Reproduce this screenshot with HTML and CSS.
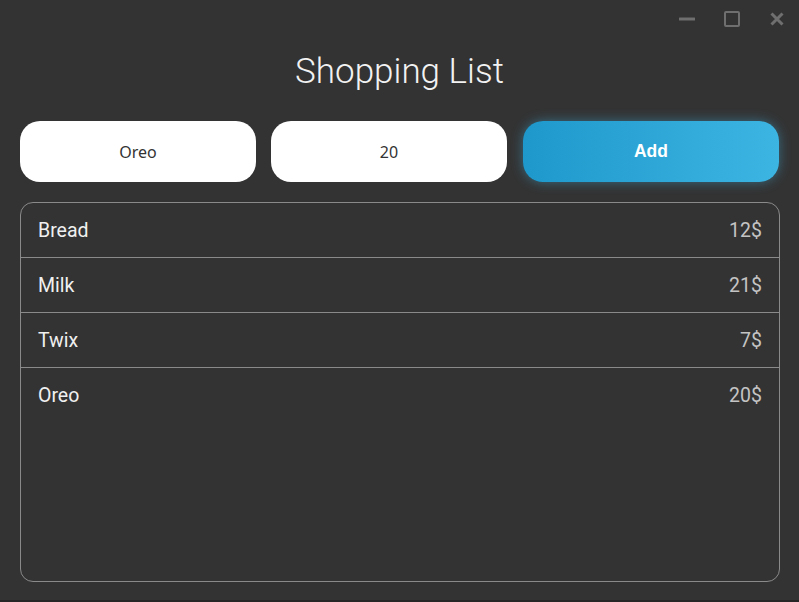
FILE: index.html
```
<!DOCTYPE html>
<html>
<head>
<meta charset="utf-8">
<link rel="stylesheet" href="styles.css">
</head>
<body>
<div class="window">
  <div class="titlebar">
    <svg class="ctl" width="16" height="16" viewBox="0 0 16 16"><rect x="0" y="6.5" width="16" height="3" rx="0.5" fill="#6f6f6f"/></svg>
    <svg class="ctl" width="16" height="16" viewBox="0 0 16 16"><rect x="1" y="1" width="14" height="14" rx="1" fill="none" stroke="#6f6f6f" stroke-width="2"/></svg>
    <svg class="ctl" width="16" height="16" viewBox="0 0 16 16"><path d="M2.5 2.5 L13.5 13.5 M13.5 2.5 L2.5 13.5" stroke="#6f6f6f" stroke-width="3"/></svg>
  </div>
  <h1 class="title">Shopping List</h1>
  <div class="form">
    <div class="field">Oreo</div>
    <div class="field">20</div>
    <div class="btn">Add</div>
  </div>
  <div class="list">
    <div class="row"><span class="name">Bread</span><span class="price">12$</span></div>
    <div class="row"><span class="name">Milk</span><span class="price">21$</span></div>
    <div class="row"><span class="name">Twix</span><span class="price">7$</span></div>
    <div class="row last"><span class="name">Oreo</span><span class="price">20$</span></div>
  </div>
</div>
</body>
</html>
```
FILE: styles.css
```
html, body {
  margin: 0;
  padding: 0;
  background: #333333;
}
.window {
  width: 799px;
  height: 602px;
  box-sizing: border-box;
  border-bottom: 2px solid #262626;
  background: #333333;
  display: flex;
  flex-direction: column;
  font-family: Roboto, "Liberation Sans", sans-serif;
}
.titlebar {
  height: 37px;
  display: flex;
  justify-content: flex-end;
  align-items: center;
  gap: 29px;
  padding-right: 14px;
  box-sizing: border-box;
}
.title {
  margin: 14px 0 0;
  height: 42px;
  text-align: center;
  font-weight: 300;
  font-size: 35px;
  line-height: 42px;
  color: #f2f2f2;
}
.form {
  margin: 28px 19px 0 20px;
  display: grid;
  grid-template-columns: 236px 236px 257px;
  gap: 15px;
  height: 61px;
}
.field {
  background: #ffffff;
  border-radius: 20px;
  display: flex;
  align-items: center;
  justify-content: center;
  font-size: 16px;
  color: #333;
  font-family: "Noto Sans", sans-serif;
}
.btn {
  margin-left: 1px;
  border-radius: 20px;
  background: linear-gradient(90deg, #1e98cb, #3db5e3);
  box-shadow: 0 0 12px rgba(64, 180, 230, 0.45);
  display: flex;
  align-items: center;
  justify-content: center;
  font-family: "Liberation Sans", Arial, sans-serif;
  font-weight: bold;
  font-size: 17.5px;
  color: #ffffff;
}
.list {
  margin: 20px 19px 0 20px;
  height: 380px;
  box-sizing: border-box;
  border: 1px solid #8a8a8a;
  border-radius: 13px;
  display: flex;
  flex-direction: column;
}
.row {
  height: 55px;
  box-sizing: border-box;
  border-bottom: 1px solid #8a8a8a;
  display: flex;
  justify-content: space-between;
  align-items: center;
  padding: 0 17px 0 17px;
  font-size: 19.5px;
  flex: none;
}
.row.last {
  border-bottom: none;
}
.name {
  color: #f0f0f0;
}
.price {
  color: #c4c4c4;
}
```
